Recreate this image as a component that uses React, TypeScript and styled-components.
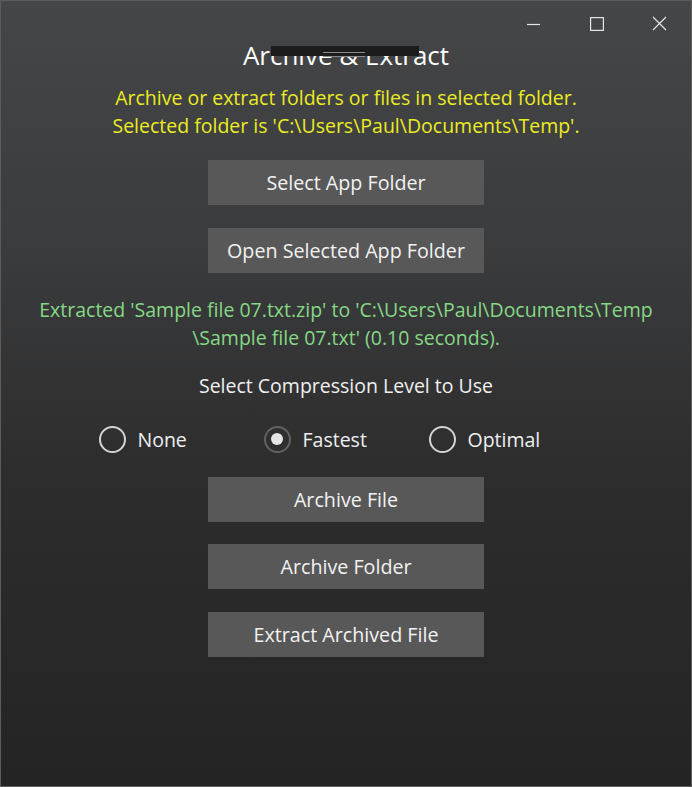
import React from "react";
import styled, { createGlobalStyle } from "styled-components";

const Global = createGlobalStyle`
  html, body { margin: 0; padding: 0; background: #2a2a2a; }
  * { box-sizing: border-box; }
`;

const Window = styled.div`
  position: relative;
  width: 692px;
  height: 787px;
  border: 1px solid #5c5c5c;
  background: linear-gradient(180deg, #454648 0%, #3b3c3d 30%, #2d2d2e 60%, #242424 100%);
  font-family: "Open Sans", "Noto Sans", sans-serif;
  color: #f0f0f0;
  display: flex;
  flex-direction: column;
  align-items: center;
  padding-top: 36px;
  overflow: hidden;
`;

const CaptionBar = styled.div`
  position: absolute;
  top: 0;
  right: 0;
  display: flex;
`;

const CaptionButton = styled.div`
  width: 63px;
  height: 45px;
  display: flex;
  align-items: center;
  justify-content: center;
  color: #e6e6e6;
`;

const HeadingWrap = styled.div`
  position: relative;
  width: 100%;
`;

const Heading = styled.h1`
  margin: 0;
  font-weight: 400;
  font-size: 26px;
  line-height: 36px;
  color: #ffffff;
  text-align: center;
`;

const Redaction = styled.div`
  position: absolute;
  left: 50%;
  margin-left: -75px;
  top: 9px;
  width: 148px;
  height: 10px;
  background: #1c1c1d;
  &::after {
    content: "";
    position: absolute;
    left: 52px;
    top: 6px;
    width: 42px;
    height: 3px;
    border-top: 1px solid #8a8a8a;
    border-bottom: 1px solid #8a8a8a;
  }
`;

const Message = styled.p<{ $tone: "yellow" | "green" | "white"; $mt: number }>`
  margin: ${(p) => p.$mt}px 0 0;
  font-size: 19.5px;
  line-height: 28px;
  text-align: center;
  white-space: nowrap;
  color: ${(p) => (p.$tone === "yellow" ? "#ecec22" : p.$tone === "green" ? "#86d886" : "#f0f0f0")};
`;

const ActionButton = styled.button<{ $mt: number }>`
  margin-top: ${(p) => p.$mt}px;
  width: 276px;
  height: 45px;
  border: none;
  background: #585858;
  color: #f2f2f2;
  font-family: inherit;
  font-size: 19.7px;
  padding: 0;
  cursor: pointer;
`;

const RadioRow = styled.div`
  margin-top: 19px;
  display: flex;
  height: 40px;
`;

const RadioItem = styled.label`
  width: 165px;
  display: flex;
  align-items: center;
  gap: 12px;
  font-size: 19.5px;
  color: #f0f0f0;
`;

const RadioCircle = styled.span<{ $checked: boolean }>`
  width: 27px;
  height: 27px;
  border-radius: 50%;
  border: 2.5px solid ${(p) => (p.$checked ? "#626262" : "#d4d4d4")};
  display: flex;
  align-items: center;
  justify-content: center;
  &::after {
    content: "";
    width: 12px;
    height: 12px;
    border-radius: 50%;
    background: #e6e6e6;
    display: ${(p) => (p.$checked ? "block" : "none")};
  }
`;

const Radio = ({ label, checked }: { label: string; checked?: boolean }) => (
  <RadioItem>
    <RadioCircle $checked={!!checked} />
    <span>{label}</span>
  </RadioItem>
);

export default function App() {
  return (
    <>
      <Global />
      <Window>
        <CaptionBar>
          <CaptionButton>
            <svg width="14" height="14" viewBox="0 0 14 14">
              <line x1="0" y1="7.5" x2="13" y2="7.5" stroke="currentColor" strokeWidth="1.2" />
            </svg>
          </CaptionButton>
          <CaptionButton>
            <svg width="14" height="14" viewBox="0 0 14 14">
              <rect x="0.6" y="0.6" width="12.8" height="12.8" fill="none" stroke="currentColor" strokeWidth="1.2" />
            </svg>
          </CaptionButton>
          <CaptionButton>
            <svg width="15" height="15" viewBox="0 0 15 15">
              <path d="M1 1 L14 14 M14 1 L1 14" stroke="currentColor" strokeWidth="1.2" />
            </svg>
          </CaptionButton>
        </CaptionBar>

        <HeadingWrap>
          <Heading>Archive &amp; Extract</Heading>
          <Redaction />
        </HeadingWrap>

        <Message $tone="yellow" $mt={11}>
          Archive or extract folders or files in selected folder.
          <br />
          Selected folder is 'C:\Users\Paul\Documents\Temp'.
        </Message>

        <ActionButton $mt={20}>Select App Folder</ActionButton>
        <ActionButton $mt={23}>Open Selected App Folder</ActionButton>

        <Message $tone="green" $mt={23}>
          Extracted 'Sample file 07.txt.zip' to 'C:\Users\Paul\Documents\Temp
          <br />
          \Sample file 07.txt' (0.10 seconds).
        </Message>

        <Message $tone="white" $mt={20}>
          Select Compression Level to Use
        </Message>

        <RadioRow>
          <Radio label="None" />
          <Radio label="Fastest" checked />
          <Radio label="Optimal" />
        </RadioRow>

        <ActionButton $mt={18}>Archive File</ActionButton>
        <ActionButton $mt={22}>Archive Folder</ActionButton>
        <ActionButton $mt={23}>Extract Archived File</ActionButton>
      </Window>
    </>
  );
}
